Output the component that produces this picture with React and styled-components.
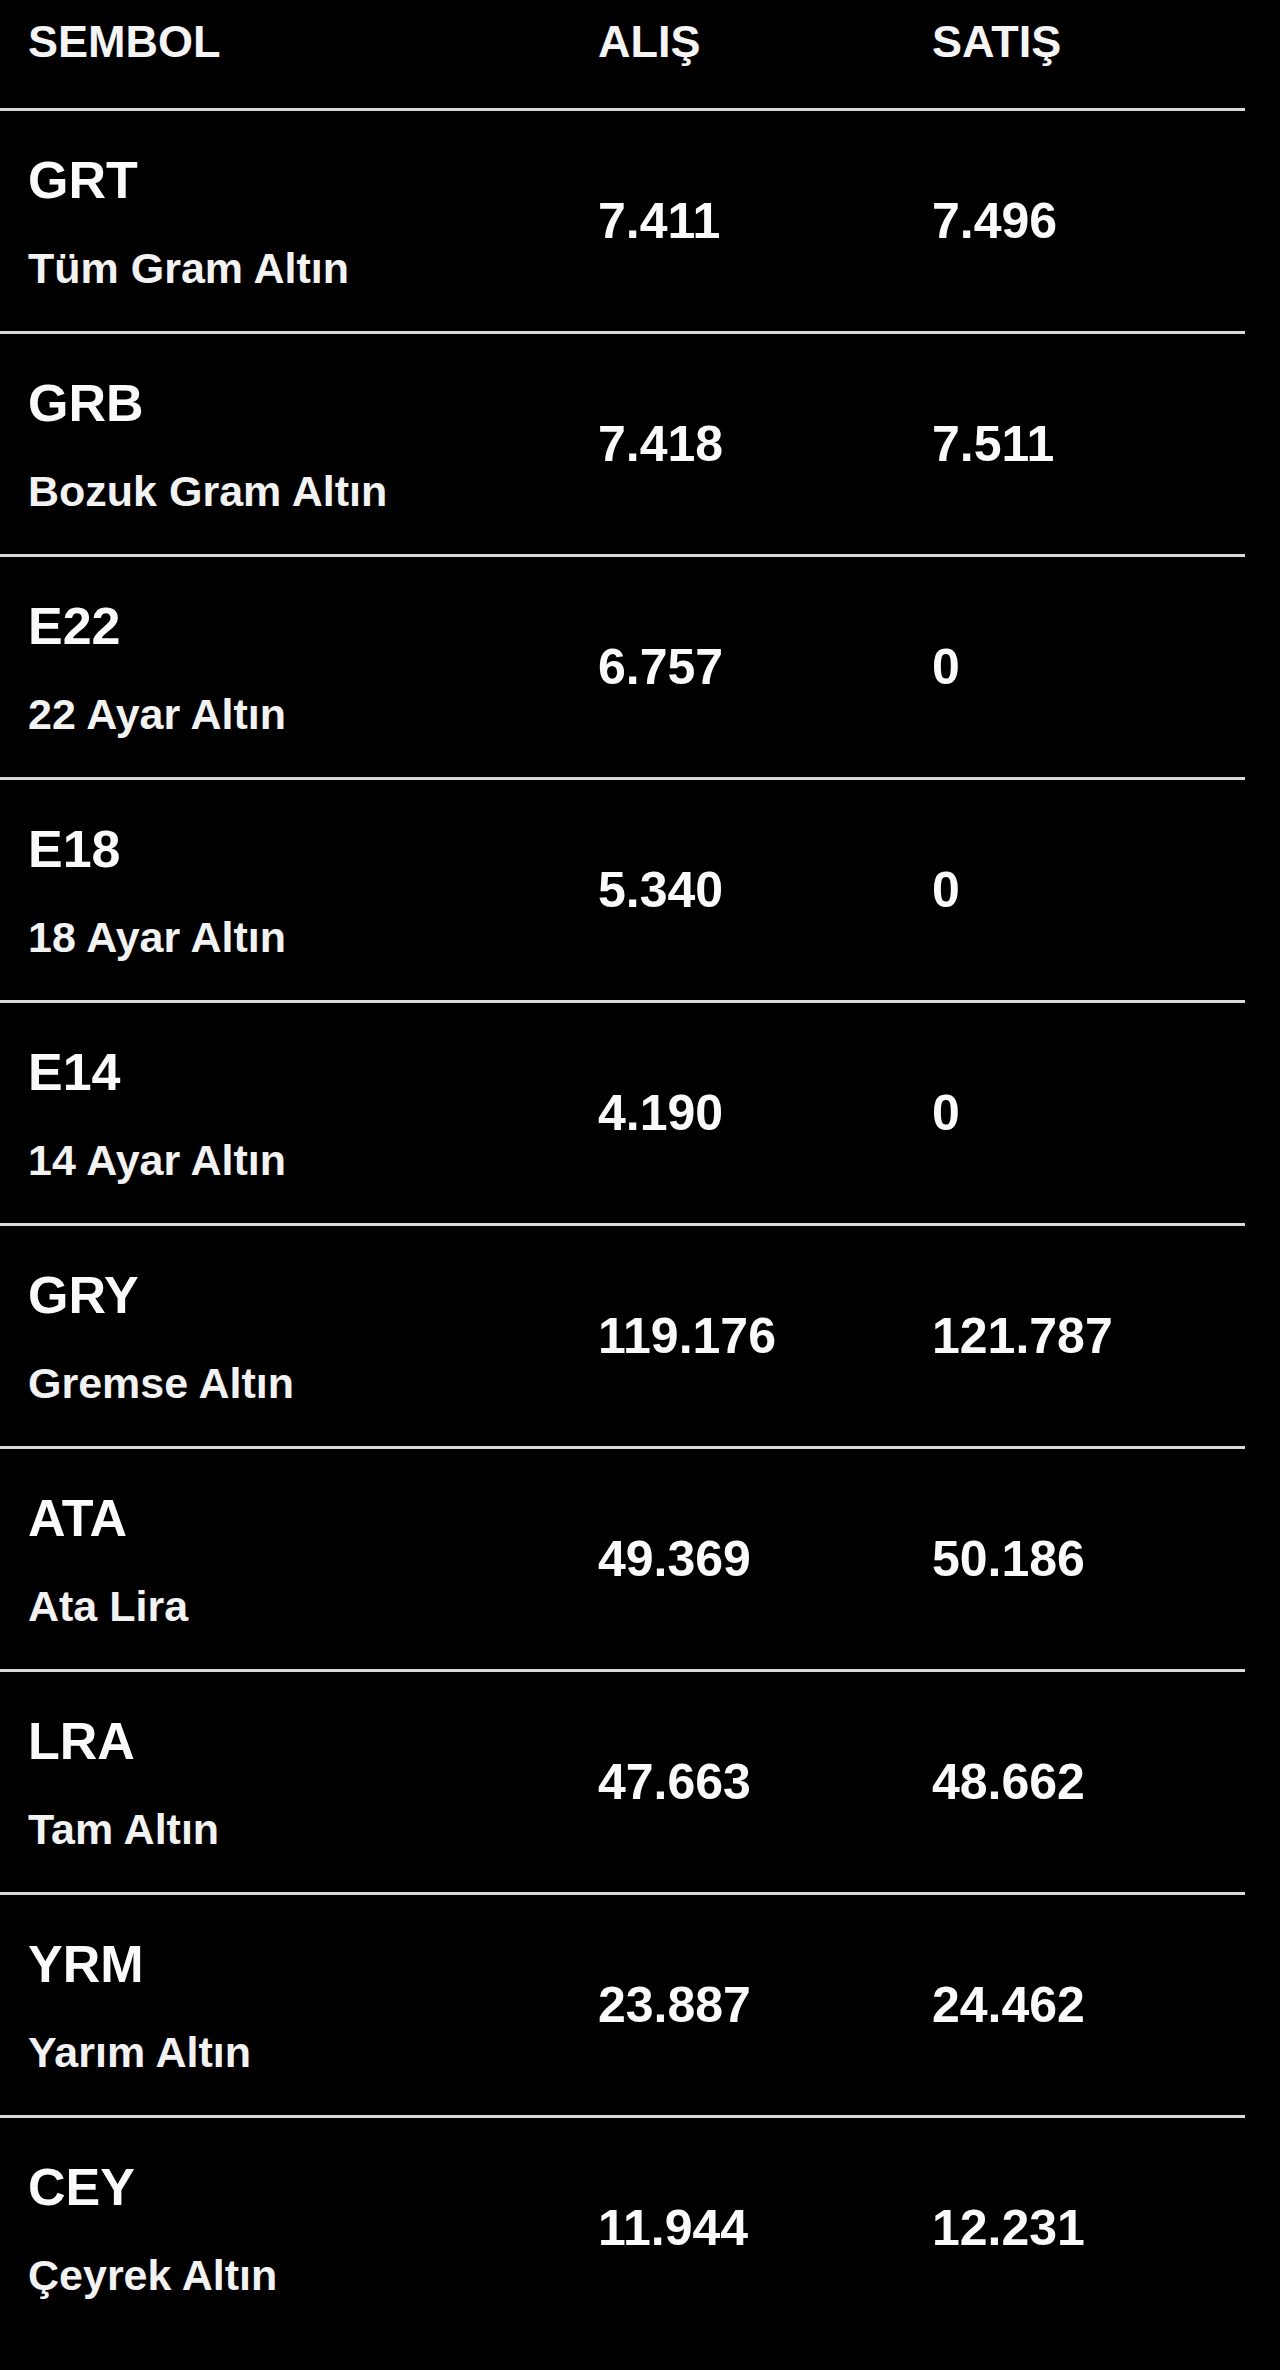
import React from 'react'
import styled, { createGlobalStyle } from 'styled-components'

const GlobalStyle = createGlobalStyle`
  html, body {
    margin: 0;
    padding: 0;
    background: #000;
  }
  body {
    font-family: "Liberation Sans", Arial, sans-serif;
    color: #fff;
    min-height: 2370px;
  }
`;

const Table = styled.div`
  width: 1245px;
  background: #000;
`;

const Row = styled.div`
  display: grid;
  grid-template-columns: 570px 334px 1fr;
  align-items: center;
  padding-left: 28px;
  border-bottom: ${p => (p.last ? 'none' : '3px solid #d9d9d9')};
`;

const HeaderRow = styled(Row)`
  align-items: start;
  padding-top: 19px;
  height: 89px;
`;

const HeadCell = styled.div`
  font-size: 45px;
  font-weight: 700;
  line-height: 1;
  color: #f4f4f4;
`;

const DataRow = styled(Row)`
  height: 220px;
`;

const SymbolCell = styled.div`
  display: flex;
  flex-direction: column;
  gap: 41px;
  padding-top: 2px;
`;

const Code = styled.div`
  font-size: 52px;
  font-weight: 700;
  line-height: 1;
  color: #fafafa;
`;

const Name = styled.div`
  font-size: 43px;
  font-weight: 600;
  line-height: 1;
  color: #f2f2f2;
`;

const Price = styled.div`
  font-size: 50px;
  font-weight: 700;
  line-height: 1;
  color: #fafafa;
`;

const rates = [
  { code: 'GRT', name: 'Tüm Gram Altın', buy: '7.411', sell: '7.496' },
  { code: 'GRB', name: 'Bozuk Gram Altın', buy: '7.418', sell: '7.511' },
  { code: 'E22', name: '22 Ayar Altın', buy: '6.757', sell: '0' },
  { code: 'E18', name: '18 Ayar Altın', buy: '5.340', sell: '0' },
  { code: 'E14', name: '14 Ayar Altın', buy: '4.190', sell: '0' },
  { code: 'GRY', name: 'Gremse Altın', buy: '119.176', sell: '121.787' },
  { code: 'ATA', name: 'Ata Lira', buy: '49.369', sell: '50.186' },
  { code: 'LRA', name: 'Tam Altın', buy: '47.663', sell: '48.662' },
  { code: 'YRM', name: 'Yarım Altın', buy: '23.887', sell: '24.462' },
  { code: 'CEY', name: 'Çeyrek Altın', buy: '11.944', sell: '12.231' },
]

const App = () => {
  return (
    <>
      <GlobalStyle />
      <Table>
        <HeaderRow>
          <HeadCell>SEMBOL</HeadCell>
          <HeadCell>ALIŞ</HeadCell>
          <HeadCell>SATIŞ</HeadCell>
        </HeaderRow>
        {rates.map((r, i) => (
          <DataRow key={r.code} last={i === rates.length - 1}>
            <SymbolCell>
              <Code>{r.code}</Code>
              <Name>{r.name}</Name>
            </SymbolCell>
            <Price>{r.buy}</Price>
            <Price>{r.sell}</Price>
          </DataRow>
        ))}
      </Table>
    </>
  )
}

export default App
